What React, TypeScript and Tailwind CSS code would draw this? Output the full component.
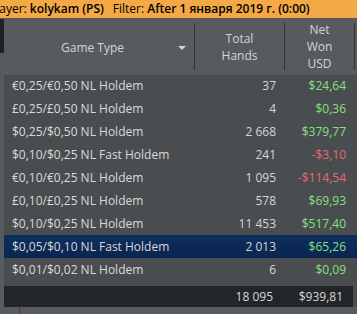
type Row = { game: string; hands: string; net: string; neg?: boolean }

const ROWS: Row[] = [
  { game: '€0,25/€0,50 NL Holdem', hands: '37', net: '$24,64' },
  { game: '£0,25/£0,50 NL Holdem', hands: '4', net: '$0,36' },
  { game: '$0,25/$0,50 NL Holdem', hands: '2 668', net: '$379,77' },
  { game: '$0,10/$0,25 NL Fast Holdem', hands: '241', net: '-$3,10', neg: true },
  { game: '€0,10/€0,25 NL Holdem', hands: '1 095', net: '-$114,54', neg: true },
  { game: '£0,10/£0,25 NL Holdem', hands: '578', net: '$69,93' },
  { game: '$0,10/$0,25 NL Holdem', hands: '11 453', net: '$517,40' },
  { game: '$0,05/$0,10 NL Fast Holdem', hands: '2 013', net: '$65,26' },
  { game: '$0,01/$0,02 NL Holdem', hands: '6', net: '$0,09' },
]

const SELECTED = 7

export default function App() {
  return (
    <div
      className="w-[357px] h-[314px] overflow-hidden bg-[#575a5e] text-[12px] flex flex-col"
      style={{ fontFamily: '"Open Sans", "Noto Sans", sans-serif' }}
    >
      {/* filter bar */}
      <div className="h-[18px] shrink-0 bg-[#f4a846] overflow-hidden">
        <div className="text-black text-[12px] leading-[18px] whitespace-nowrap -ml-[11px]">
          Player: <span className="font-semibold">kolykam (PS)</span>
          <span className="ml-[9px]">Filter: </span>
          <span className="font-semibold">After 1 января 2019 г. (0:00)</span>
        </div>
      </div>

      {/* header */}
      <div className="h-[57px] shrink-0 flex text-[#d4d4d4] leading-[17px]">
        <div className="w-[4px] flex flex-col pt-[1px]">
          <div className="h-[34px] w-[4px] bg-[#1e2022]" />
        </div>
        <div className="w-[190px] flex items-center pl-[57px] pr-[8px] pt-[2px]">
          <span className="flex-1">Game Type</span>
          <span className="w-0 h-0 border-l-[4px] border-r-[4px] border-t-[4px] border-l-transparent border-r-transparent border-t-[#d4d4d4]" />
        </div>
        <div className="w-[1px] my-[5px] bg-[#2f3133]" />
        <div className="w-[89px] flex flex-col items-center justify-center text-center pt-[1px]">
          <span>Total</span>
          <span>Hands</span>
        </div>
        <div className="w-[1px] my-[5px] bg-[#2f3133]" />
        <div className="w-[69px] flex flex-col items-center justify-center text-center">
          <span>Net</span>
          <span>Won</span>
          <span>USD</span>
        </div>
        <div className="w-[1px] my-[5px] bg-[#2f3133]" />
      </div>

      {/* body */}
      <div className="flex-1 flex pl-[4px]">
        <div className="flex-1 bg-[#4a4d50] flex flex-col">
          {ROWS.map((r, i) => (
            <div
              key={r.game}
              className={`h-[23px] shrink-0 flex items-center ${
                i === SELECTED ? 'bg-gradient-to-b from-[#0d2f5e] to-[#0a2550]' : ''
              } ${i === 0 ? '-mt-[1px]' : ''}`}
            >
              <div className="w-[190px] pl-[8px] text-[#dadada] whitespace-nowrap">{r.game}</div>
              <div className="w-[82px] text-right text-[#d6d6d6]">{r.hands}</div>
              <div
                className={`w-[70px] text-right ${r.neg ? 'text-[#e86a6a]' : 'text-[#86e07f]'}`}
              >
                {r.net}
              </div>
            </div>
          ))}
          <div className="h-[5px]" />
          <div className="h-[21px] bg-[#232629] flex items-center mr-[4px] text-[#d6d6d6]">
            <div className="w-[190px]" />
            <div className="w-[79px] text-right">18 095</div>
            <div className="w-[70px] text-right">$939,81</div>
          </div>
          <div className="flex-1 bg-[#575a5e] -ml-[4px] flex">
            <div className="w-[16px] ml-[4px] border-r border-[#3a3c3f]" />
          </div>
        </div>
      </div>
    </div>
  )
}
